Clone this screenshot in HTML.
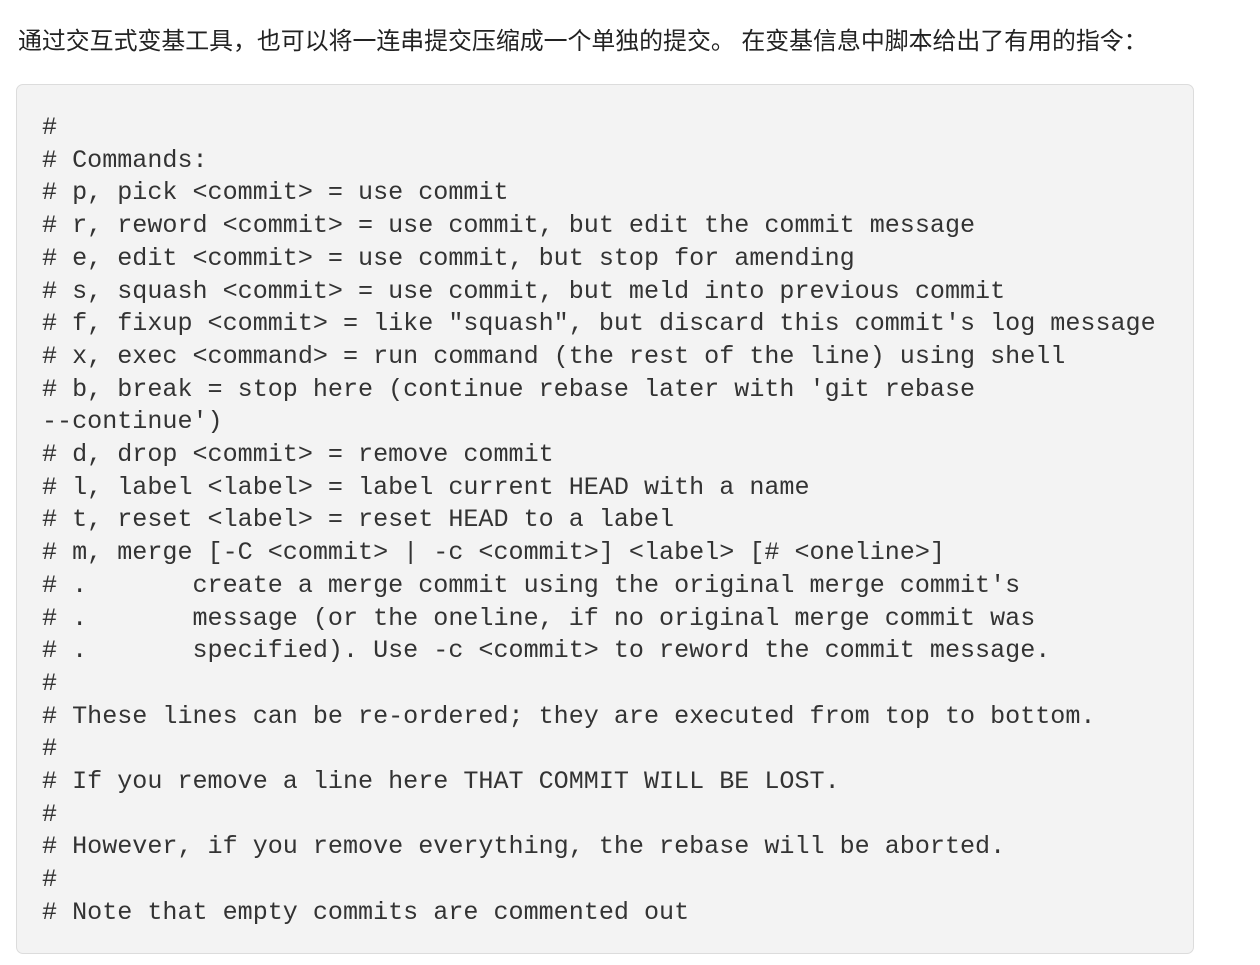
<!DOCTYPE html>
<html><head><meta charset="utf-8"><style>
body{margin:0;background:#fff;width:1260px;height:965px;overflow:hidden}
p{position:absolute;left:18px;top:24px;margin:0;font:23.9px/36px "Liberation Sans","Noto Sans CJK SC",sans-serif;color:#222;white-space:nowrap}
pre{position:absolute;left:16px;top:84px;width:1178px;height:870px;box-sizing:border-box;margin:0;background:#f3f3f3;border:1.5px solid #dcdcdc;border-radius:7px;padding:27px 0 0 25px;font:25.08px/32.7px "Liberation Mono",monospace;color:#333}
</style></head><body>
<p>通过交互式变基工具，也可以将一连串提交压缩成一个单独的提交。 在变基信息中脚本给出了有用的指令：</p>
<pre>#
# Commands:
# p, pick &lt;commit&gt; = use commit
# r, reword &lt;commit&gt; = use commit, but edit the commit message
# e, edit &lt;commit&gt; = use commit, but stop for amending
# s, squash &lt;commit&gt; = use commit, but meld into previous commit
# f, fixup &lt;commit&gt; = like "squash", but discard this commit's log message
# x, exec &lt;command&gt; = run command (the rest of the line) using shell
# b, break = stop here (continue rebase later with 'git rebase
--continue')
# d, drop &lt;commit&gt; = remove commit
# l, label &lt;label&gt; = label current HEAD with a name
# t, reset &lt;label&gt; = reset HEAD to a label
# m, merge [-C &lt;commit&gt; | -c &lt;commit&gt;] &lt;label&gt; [# &lt;oneline&gt;]
# .       create a merge commit using the original merge commit's
# .       message (or the oneline, if no original merge commit was
# .       specified). Use -c &lt;commit&gt; to reword the commit message.
#
# These lines can be re-ordered; they are executed from top to bottom.
#
# If you remove a line here THAT COMMIT WILL BE LOST.
#
# However, if you remove everything, the rebase will be aborted.
#
# Note that empty commits are commented out</pre>
</body></html>
